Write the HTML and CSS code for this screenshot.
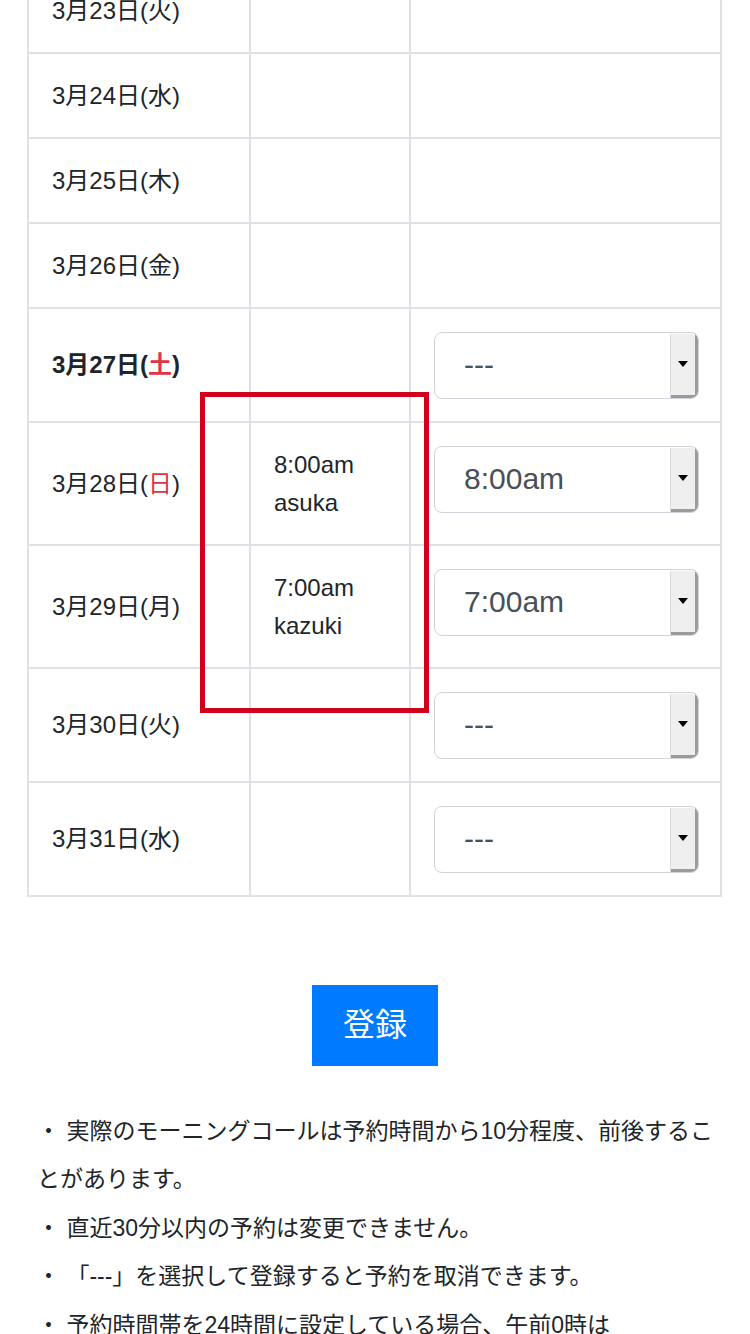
FILE: index.html
```html
<!DOCTYPE html>
<html lang="ja">
<head>
  <meta charset="UTF-8" />
  <meta name="viewport" content="width=750" />
  <title>モーニングコール予約</title>
  <link rel="stylesheet" href="styles.css">
</head>
<body>
  <div class="table-wrap">
    <table class="call-table">
      <colgroup>
        <col class="col-date">
        <col class="col-booked">
        <col class="col-select">
      </colgroup>
      <tr><td>3月23日(火)</td><td></td><td></td></tr>
      <tr><td>3月24日(水)</td><td></td><td></td></tr>
      <tr><td>3月25日(木)</td><td></td><td></td></tr>
      <tr><td>3月26日(金)</td><td></td><td></td></tr>
      <tr>
        <td class="today">3月27日(<span class="holiday">土</span>)</td>
        <td></td>
        <td class="cell-select"><div class="select"><span class="select-value">---</span><span class="select-btn"><i class="arrow"></i></span></div></td>
      </tr>
      <tr>
        <td>3月28日(<span class="holiday">日</span>)</td>
        <td>8:00am<br>asuka</td>
        <td class="cell-select"><div class="select"><span class="select-value">8:00am</span><span class="select-btn"><i class="arrow"></i></span></div></td>
      </tr>
      <tr>
        <td>3月29日(月)</td>
        <td>7:00am<br>kazuki</td>
        <td class="cell-select"><div class="select"><span class="select-value">7:00am</span><span class="select-btn"><i class="arrow"></i></span></div></td>
      </tr>
      <tr>
        <td>3月30日(火)</td>
        <td></td>
        <td class="cell-select"><div class="select"><span class="select-value">---</span><span class="select-btn"><i class="arrow"></i></span></div></td>
      </tr>
      <tr>
        <td>3月31日(水)</td>
        <td></td>
        <td class="cell-select"><div class="select"><span class="select-value">---</span><span class="select-btn"><i class="arrow"></i></span></div></td>
      </tr>
    </table>
    <div class="highlight"></div>
  </div>

  <div class="actions">
    <button type="submit" class="submit-btn">登録</button>
  </div>

  <div class="notes">
    <p>・ 実際のモーニングコールは予約時間から10分程度、前後することがあります。</p>
    <p>・ 直近30分以内の予約は変更できません。</p>
    <p>・ 「---」を選択して登録すると予約を取消できます。</p>
    <p>・ 予約時間帯を24時間に設定している場合、午前0時は</p>
  </div>
</body>
</html>
```

FILE: styles.css
```css
body { margin: 0; background: #fff; color: #212529; font-family: "Liberation Sans", "Noto Sans CJK JP", sans-serif; overflow: hidden; }
.table-wrap { position: relative; margin: -33px 28px 0 27px; }
.call-table { width: 100%; border-collapse: collapse; table-layout: fixed; font-size: 24px; line-height: 38px; }
.col-date { width: 222px; }
.col-booked { width: 160px; }
.call-table td { border: 2px solid #dee2e6; padding: 22.5px 24px 22.5px 23px; vertical-align: middle; }
.call-table td.cell-select { vertical-align: top; padding: 22.5px 21px 22.5px 23px; }
.today { font-weight: bold; }
.holiday { color: #dc3545; }
.select { display: flex; height: 67px; box-sizing: border-box; border: 1.5px solid #ced4da; border-radius: 8px; background: #fff; overflow: hidden; }
.select-value { flex: 1; display: flex; align-items: center; padding-left: 29px; font-size: 30px; color: #495057; }
.select-btn { width: 28px; margin: 1px 0 0; box-sizing: border-box; background: #efefef; border-left: 1px solid #dcdcdc; box-shadow: inset -3px -3px 0 #9b9b9b; display: flex; align-items: center; justify-content: center; padding: 0 3px 3px 0; }
.arrow { width: 0; height: 0; border-left: 5px solid transparent; border-right: 5px solid transparent; border-top: 6px solid #000; }
.highlight { position: absolute; left: 173px; top: 425px; width: 229px; height: 321px; box-sizing: border-box; border: 5px solid #d0021b; }
.actions { text-align: center; margin-top: 87.5px; }
.submit-btn { background: #007bff; color: #fff; border: 1px solid #007bff; border-radius: 0; font-family: "Liberation Sans", "Noto Sans CJK JP", sans-serif; font-size: 32px; line-height: 48px; padding: 15.5px 30px; }
.notes { margin: 41px 30px 0 37px; width: 682px; font-size: 23px; line-height: 48.5px; }
.notes p { margin: 0; }
```
